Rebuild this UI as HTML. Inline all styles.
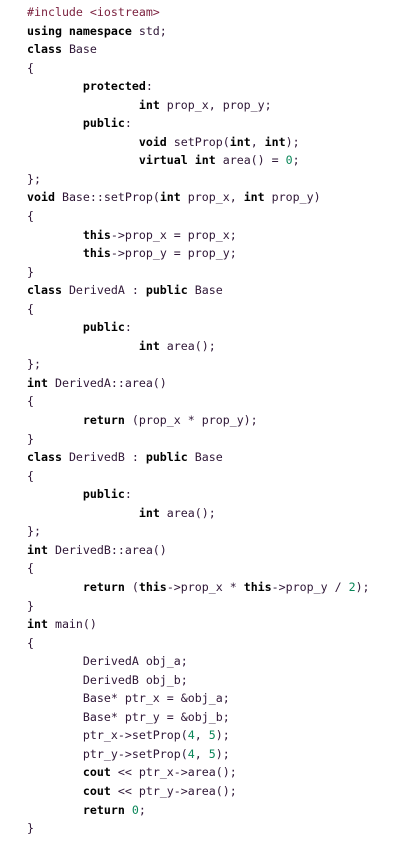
<!DOCTYPE html>
<html><head><style>
body{margin:0;background:#fff;width:408px;height:849px;overflow:hidden}
pre{margin:0;position:absolute;left:27px;top:3px;font-family:"DejaVu Sans Mono","Liberation Mono",monospace;font-size:11.62px;line-height:18.55px;color:#2e1636;tab-size:8}
b{color:#000;font-weight:bold}
.n{color:#098658}
.p{color:#7a1f3d}
</style></head><body>
<pre><span class="p">#include &lt;iostream&gt;</span>
<b>using namespace</b> std;
<b>class</b> Base
{
        <b>protected</b>:
                <b>int</b> prop_x, prop_y;
        <b>public</b>:
                <b>void</b> setProp(<b>int</b>, <b>int</b>);
                <b>virtual int</b> area() = <span class="n">0</span>;
};
<b>void</b> Base::setProp(<b>int</b> prop_x, <b>int</b> prop_y)
{
        <b>this</b>-&gt;prop_x = prop_x;
        <b>this</b>-&gt;prop_y = prop_y;
}
<b>class</b> DerivedA : <b>public</b> Base
{
        <b>public</b>:
                <b>int</b> area();
};
<b>int</b> DerivedA::area()
{
        <b>return</b> (prop_x * prop_y);
}
<b>class</b> DerivedB : <b>public</b> Base
{
        <b>public</b>:
                <b>int</b> area();
};
<b>int</b> DerivedB::area()
{
        <b>return</b> (<b>this</b>-&gt;prop_x * <b>this</b>-&gt;prop_y / <span class="n">2</span>);
}
<b>int</b> main()
{
        DerivedA obj_a;
        DerivedB obj_b;
        Base* ptr_x = &amp;obj_a;
        Base* ptr_y = &amp;obj_b;
        ptr_x-&gt;setProp(<span class="n">4</span>, <span class="n">5</span>);
        ptr_y-&gt;setProp(<span class="n">4</span>, <span class="n">5</span>);
        <b>cout</b> &lt;&lt; ptr_x-&gt;area();
        <b>cout</b> &lt;&lt; ptr_y-&gt;area();
        <b>return</b> <span class="n">0</span>;
}</pre>
</body></html>
